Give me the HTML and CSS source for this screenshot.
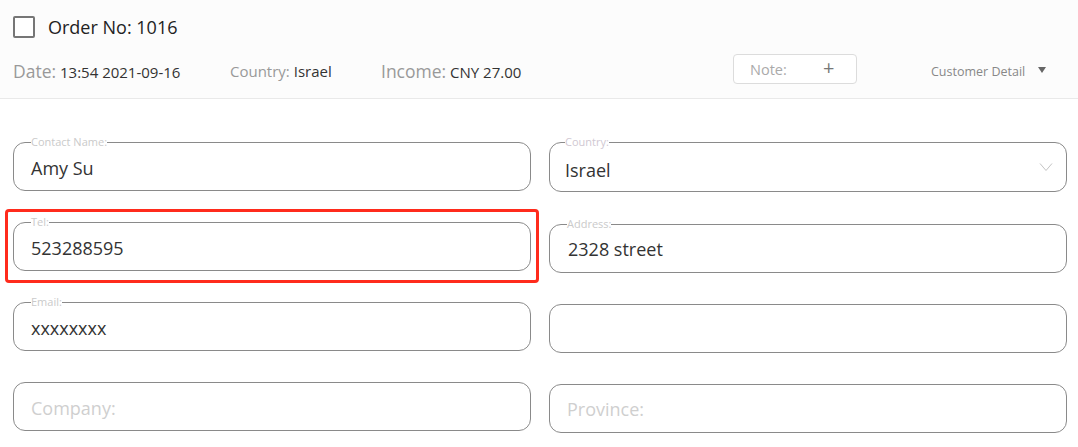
FILE: index.html
```html
<!DOCTYPE html>
<html lang="en">
<head>
<meta charset="utf-8">
<title>Order 1016</title>
<link rel="stylesheet" href="styles.css">
</head>
<body>
<div class="page">
  <header class="order-head">
    <div class="title-row">
      <span class="checkbox"></span>
      <h1 class="order-no">Order No: 1016</h1>
    </div>
    <div class="meta-row">
      <div class="meta meta-date"><span class="meta-key big">Date:</span> <span class="meta-val">13:54 2021-09-16</span></div>
      <div class="meta meta-country"><span class="meta-key">Country:</span> <span class="meta-val">Israel</span></div>
      <div class="meta meta-income"><span class="meta-key big">Income:</span> <span class="meta-val">CNY 27.00</span></div>
      <button class="note-btn" type="button"><span class="note-label">Note:</span><span class="note-plus">+</span></button>
      <div class="cust-detail">Customer Detail <span class="tri"></span></div>
    </div>
  </header>

  <section class="form-grid">
    <div class="col col-left">
      <fieldset class="field"><legend>Contact Name:</legend><div class="value">Amy Su</div></fieldset>
      <fieldset class="field field-tel"><legend>Tel:</legend><div class="value">523288595</div></fieldset>
      <fieldset class="field"><legend>Email:</legend><div class="value">xxxxxxxx</div></fieldset>
      <fieldset class="field nolabel"><div class="placeholder">Company:</div></fieldset>
    </div>
    <div class="col col-right">
      <fieldset class="field field-select"><legend class="lg-country">Country:</legend><div class="value">Israel</div>
        <svg class="chev" width="14" height="10" viewBox="0 0 14 10"><path d="M1 1.5 L7 8.5 L13 1.5" fill="none" stroke="#c4c4c4" stroke-width="1"/></svg>
      </fieldset>
      <fieldset class="field field-addr"><legend>Address:</legend><div class="value">2328 street</div></fieldset>
      <fieldset class="field nolabel"><div class="value"></div></fieldset>
      <fieldset class="field nolabel field-prov"><div class="placeholder">Province:</div></fieldset>
    </div>
  </section>
</div>
</body>
</html>
```
FILE: styles.css
```css
* { box-sizing: border-box; }
html, body { margin: 0; padding: 0; background: #fff; }
body { font-family: "Open Sans", "Noto Sans", "Liberation Sans", sans-serif; color: #333; }

.page { width: 1078px; height: 447px; overflow: hidden; }

.order-head {
  background: #fcfcfc;
  height: 99px;
  border-bottom: 1px solid #e9e9e9;
  padding: 16px 0 0 13px;
}
.title-row { display: flex; align-items: center; gap: 13px; height: 22px; }
.checkbox {
  width: 22px; height: 22px;
  border: 2px solid #767676;
  border-radius: 2px;
  background: #fff;
}
.order-no { margin: 0; font-size: 18px; font-weight: 400; color: #222; line-height: 22px; }

.meta-row { display: flex; align-items: center; margin-top: 16px; height: 30px; }
.meta { white-space: nowrap; font-size: 15px; line-height: 22px; margin-top: 4px; }
.meta-key { color: #999; }
.meta-key.big { font-size: 17.5px; }
.meta-val { color: #333; }
.meta-date { width: 217px; }
.meta-country { width: 151px; }
.meta-income { width: 352px; }

.note-btn {
  width: 124px; height: 30px;
  border: 1px solid #dcdcdc; border-radius: 4px;
  background: #fff;
  display: flex; align-items: center;
  padding: 0 0 0 16px;
  font-family: inherit;
}
.note-label { color: #aaa; font-size: 14.5px; width: 73px; text-align: left; }
.note-plus { color: #777; font-size: 20px; line-height: 20px; margin-top: -3px; }

.cust-detail {
  margin-left: 74px;
  margin-top: 4px;
  font-size: 12.5px; color: #888;
  display: flex; align-items: center; gap: 13px;
  white-space: nowrap;
}
.tri {
  width: 0; height: 0;
  border-left: 4.5px solid transparent;
  border-right: 4.5px solid transparent;
  border-top: 6px solid #666;
  margin-top: -3px;
}

.form-grid {
  display: grid;
  grid-template-columns: 518px 518px;
  column-gap: 18px;
  padding: 37px 0 0 13px;
}
.col { display: flex; flex-direction: column; gap: 25px; }

.field {
  position: relative;
  display: block;
  margin: 0;
  height: 55px;
  border: 1px solid #8a8a8a;
  border-radius: 12px;
  padding: 0 17px;
  min-width: 0;
}
.field legend {
  padding: 0;
  margin-left: 0;
  font-size: 11px;
  line-height: 12px;
  color: #cacaca;
}
.field.nolabel { height: 49px; margin-top: 6px; }
.value { font-size: 18px; color: #333; line-height: 24px; height: 24px; margin-top: 8px; white-space: nowrap; }
.placeholder { font-size: 18px; color: #cfcfcf; line-height: 24px; height: 24px; margin-top: 13px; }

.col-right .field { padding-left: 15px; }
.field-select { height: 56px; }
.field-select .value { margin-top: 10px; }
.lg-country { margin-left: 5px; color: #d0c8d2 !important; }
.field-addr { margin-top: 1px; padding-left: 17px !important; }
.field-addr .value { margin-top: 7px; padding-left: 1px; }
.field-prov { padding-left: 17px !important; }
.field-prov .placeholder { margin-top: 12px; }
.chev { position: absolute; right: 13px; top: 14px; }

.field-tel::after {
  content: "";
  box-sizing: border-box;
  position: absolute;
  left: -9px; right: -9px; top: -19px;
  height: 74px;
  border: 3px solid #ff2b1c;
  border-radius: 4px;
  pointer-events: none;
}
```
